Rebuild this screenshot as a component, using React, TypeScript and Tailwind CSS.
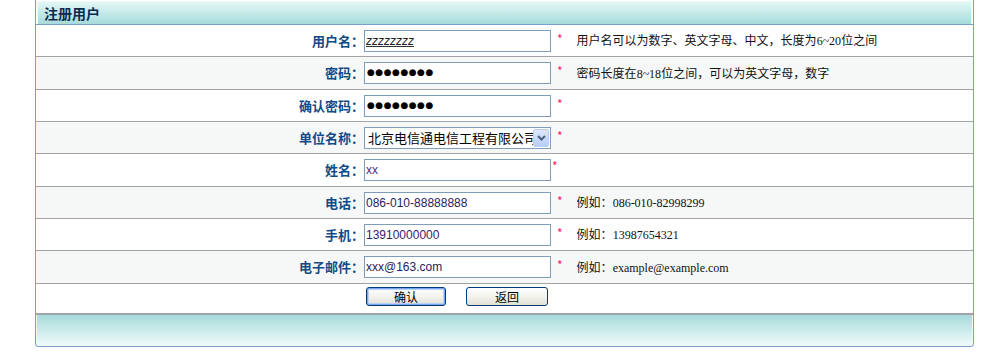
import React from 'react';

type Row = {
  label: string;
  kind: 'text' | 'password' | 'select';
  value: string;
  hint?: React.ReactNode;
  valueClass?: string;
  tightStar?: boolean;
  height: string;
};

const cn = '"Noto Sans CJK SC", "Liberation Sans", sans-serif';
const serif = '"Liberation Serif", "Noto Sans CJK SC", serif';

const Num: React.FC<{ children: React.ReactNode }> = ({ children }) => (
  <span style={{ fontFamily: serif }} className="text-[12px]">{children}</span>
);

const rows: Row[] = [
  {
    label: '用户名：',
    kind: 'text',
    value: 'zzzzzzzz',
    valueClass: 'italic underline decoration-[#333] text-[#222]',
    hint: <>用户名可以为数字、英文字母、中文，长度为<Num>6~20</Num>位之间</>,
    height: 'h-[32px]'
  },
  {
    label: '密码：',
    kind: 'password',
    value: '●●●●●●●●',
    hint: <>密码长度在<Num>8~18</Num>位之间，可以为英文字母，数字</>,
    height: 'h-[33px]'
  },
  { label: '确认密码：', kind: 'password', value: '●●●●●●●●', height: 'h-[32px]' },
  { label: '单位名称：', kind: 'select', value: '北京电信通电信工程有限公司', height: 'h-[32px]' },
  { label: '姓名：', kind: 'text', value: 'xx', valueClass: 'text-[#5a2a80]', tightStar: true, height: 'h-[33px]' },
  {
    label: '电话：',
    kind: 'text',
    value: '086-010-88888888',
    valueClass: 'text-[#2a1a60]',
    hint: <>例如：<Num>086-010-82998299</Num></>,
    height: 'h-[32px]'
  },
  {
    label: '手机：',
    kind: 'text',
    value: '13910000000',
    valueClass: 'text-[#3a1a6a]',
    hint: <>例如：<Num>13987654321</Num></>,
    height: 'h-[32px]'
  },
  {
    label: '电子邮件：',
    kind: 'text',
    value: 'xxx@163.com',
    valueClass: 'text-[#2a1a60]',
    hint: <>例如：<Num>example@example.com</Num></>,
    height: 'h-[33px]'
  }
];

const Field: React.FC<{ row: Row }> = ({ row }) => {
  if (row.kind === 'select') {
    return (
      <div className="flex h-[22px] w-[187px] items-center border border-[#7f9db9] bg-white pl-[3px] overflow-hidden">
        <span className="flex-1 overflow-hidden whitespace-nowrap text-[13px] text-black" style={{ fontFamily: cn }}>
          {row.value}
        </span>
        <div className="mr-[1px] flex h-[18px] w-[16px] shrink-0 items-center justify-center rounded-[2px] border border-[#b8cdf0] bg-gradient-to-b from-[#dde8fb] to-[#b7cdf5]">
          <svg width="9" height="6" viewBox="0 0 9 6">
            <path d="M1 1 L4.5 4.5 L8 1" fill="none" stroke="#4d6185" strokeWidth="2" />
          </svg>
        </div>
      </div>
    );
  }
  if (row.kind === 'password') {
    return (
      <div className="flex h-[22px] w-[187px] items-center border border-[#7f9db9] bg-white pl-[2px]">
        <span className="text-[9px] tracking-[0.5px] text-black" style={{ fontFamily: '"DejaVu Sans", sans-serif' }}>
          {row.value}
        </span>
      </div>
    );
  }
  return (
    <input
      readOnly
      value={row.value}
      className={`h-[22px] w-[187px] border border-[#7f9db9] bg-white px-[1px] text-[12px] outline-none ${row.valueClass ?? ''}`}
      style={{ fontFamily: '"Liberation Sans", sans-serif' }}
    />
  );
};

const XpButton: React.FC<{ label: string; focused?: boolean; width: string }> = ({ label, focused, width }) => (
  <button
    className={`h-[19px] ${width} rounded-[3px] border border-[#003c74] bg-gradient-to-b from-white via-[#f3f2ec] to-[#e2e0d6] text-[12px] leading-none text-black ${
      focused ? 'shadow-[inset_0_0_0_1px_#7aa6f0,inset_0_0_0_2px_#b9d1f8]' : ''
    }`}
    style={{ fontFamily: cn }}
  >
    {label}
  </button>
);

export default function App() {
  return (
    <div className="h-[353px] w-[986px] bg-white" style={{ fontFamily: cn }}>
      <div className="ml-[35px] w-[939px] border-x border-b border-[#7a9fcc] rounded-b-[4px]">
        {/* header */}
        <div className="h-[25px] border-b border-[#7a9fcc] p-[1px] pb-0">
          <div className="flex h-[23px] items-center border border-b-0 border-[#eefafa] bg-gradient-to-b from-[#e4f6f6] to-[#a6dbdb] pl-[6px]">
            <span className="text-[14px] font-bold text-[#0b2c4f]">注册用户</span>
          </div>
        </div>

        {rows.map((row, i) => (
          <div
            key={row.label}
            className={`flex items-center border-b border-[#a3a3a3] ${row.height} ${i % 2 === 1 ? 'bg-[#f6f8f8]' : 'bg-white'}`}
          >
            <div className="w-[328px] text-right text-[13px] font-bold text-[#114a86]">{row.label}</div>
            <div className="flex items-center">
              <Field row={row} />
              <span className={`${row.tightStar ? 'ml-[1px] -mt-[8px]' : 'ml-[6px] -mt-[4px]'} text-[12px] text-[#ff2266]`}>*</span>
              {row.hint && <span className="ml-[14px] text-[12px] text-[#111]">{row.hint}</span>}
            </div>
          </div>
        ))}

        {/* buttons */}
        <div className="flex h-[31px] items-start border-b-2 border-[#a0a4ab] bg-white pt-[3px]">
          <div className="ml-[330px] flex gap-[20px]">
            <XpButton label="确认" focused width="w-[80px]" />
            <XpButton label="返回" width="w-[82px]" />
          </div>
        </div>

        {/* footer */}
        <div className="h-[31px] rounded-b-[4px] border border-t-0 border-[#eefafa] bg-gradient-to-b from-[#a6dbdb] to-[#effafa]" />
      </div>
    </div>
  );
}
